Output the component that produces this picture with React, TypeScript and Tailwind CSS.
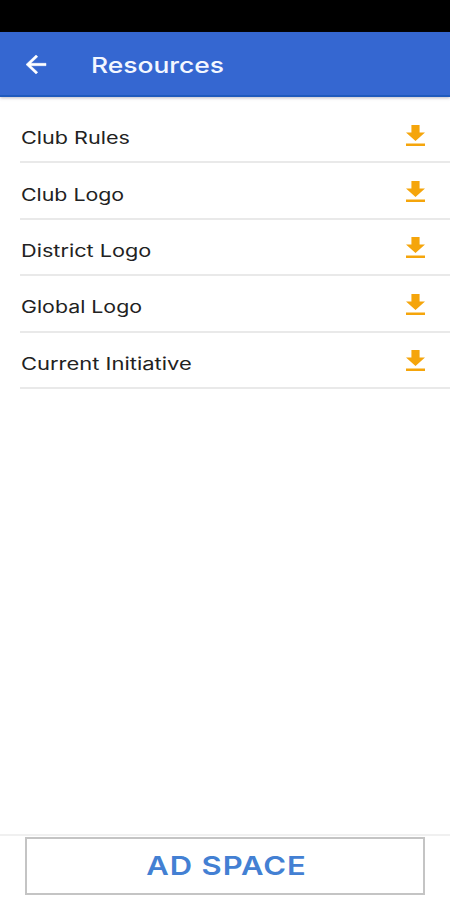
const resources = [
  { name: 'Club Rules', stretch: 'scale-x-[1.27]' },
  { name: 'Club Logo', stretch: 'scale-x-[1.255]' },
  { name: 'District Logo', stretch: 'scale-x-[1.275]' },
  { name: 'Global Logo', stretch: 'scale-x-[1.255]' },
  { name: 'Current Initiative', stretch: 'scale-x-[1.29]' },
]

const BackIcon = () => (
  <svg viewBox="4 4 16 16" preserveAspectRatio="none" className="mt-0.5 h-[19px] w-5 overflow-visible" fill="currentColor">
    <path d="M20 11H7.83l5.59-5.59L12 4l-8 8 8 8 1.41-1.41L7.83 13H20v-2z" stroke="currentColor" strokeWidth="0.4" />
  </svg>
)

const DownloadIcon = () => (
  <svg viewBox="5 3 14 17" preserveAspectRatio="none" className="mt-0.5 h-[21px] w-[19px]" fill="currentColor">
    <path d="M19 9h-4V3H9v6H5l7 7 7-7zM5 18v2h14v-2H5z" />
  </svg>
)

const App = () => {
  return (
    <div className="flex h-screen w-full flex-col overflow-hidden bg-white font-['Inter',sans-serif]">
      <div className="h-8 shrink-0 bg-black" />
      <header className="flex h-[65px] shrink-0 items-center border-b-2 border-[#1f5abd] bg-[#3567d1] pl-[26px] text-white shadow-[0_1px_3px_rgba(70,60,90,0.35)]">
        <BackIcon />
        <h1 className="mt-[3px] ml-[45px] origin-left scale-x-[1.2] text-[22px] leading-none font-medium text-[#f3f7ff]">Resources</h1>
      </header>

      <ul className="flex-1 pt-[10px] pl-5">
        {resources.map((item) => (
          <li key={item.name} className="flex h-[56.4px] items-center justify-between border-b-2 border-[#e9e9e9] pr-[25px]">
            <span className={`ml-px origin-left pt-[9px] text-[17px] leading-none text-[#222] ${item.stretch}`}>{item.name}</span>
            <button className="text-[#f5a50b]" aria-label={`Download ${item.name}`}>
              <DownloadIcon />
            </button>
          </li>
        ))}
      </ul>

      <footer className="h-[66px] shrink-0 border-t-2 border-[#f0f0f0] px-[25px] pt-px">
        <div className="flex h-[58px] items-center justify-center border-2 border-[#c4c4c4]">
          <span className="ml-[3px] scale-x-[1.19] text-[26px] leading-none font-semibold tracking-[0.03em] text-[#4380d3]">AD SPACE</span>
        </div>
      </footer>
    </div>
  )
}

export default App
